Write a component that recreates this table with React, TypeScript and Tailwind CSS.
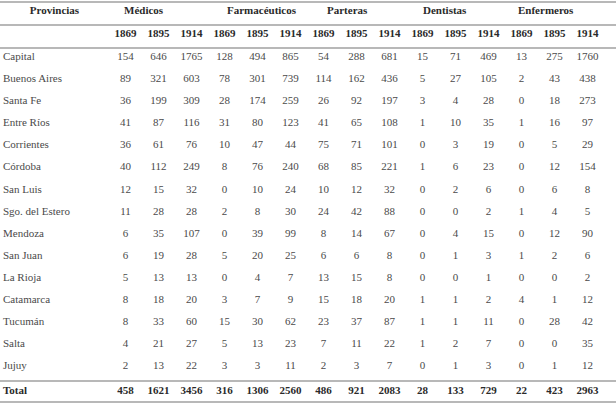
const YEARS = ["1869", "1895", "1914"];

const GROUPS = [
  { name: "Médicos", pad: "pl-[15px]" },
  { name: "Farmacéuticos", pad: "pl-[19px]" },
  { name: "Parteras", pad: "pl-[20px]" },
  { name: "Dentistas", pad: "pl-[17px]" },
  { name: "Enfermeros", pad: "pl-[13px]" },
];

const ROWS: [string, number[]][] = [
  ["Capital", [154, 646, 1765, 128, 494, 865, 54, 288, 681, 15, 71, 469, 13, 275, 1760]],
  ["Buenos Aires", [89, 321, 603, 78, 301, 739, 114, 162, 436, 5, 27, 105, 2, 43, 438]],
  ["Santa Fe", [36, 199, 309, 28, 174, 259, 26, 92, 197, 3, 4, 28, 0, 18, 273]],
  ["Entre Ríos", [41, 87, 116, 31, 80, 123, 41, 65, 108, 1, 10, 35, 1, 16, 97]],
  ["Corrientes", [36, 61, 76, 10, 47, 44, 75, 71, 101, 0, 3, 19, 0, 5, 29]],
  ["Córdoba", [40, 112, 249, 8, 76, 240, 68, 85, 221, 1, 6, 23, 0, 12, 154]],
  ["San Luis", [12, 15, 32, 0, 10, 24, 10, 12, 32, 0, 2, 6, 0, 6, 8]],
  ["Sgo. del Estero", [11, 28, 28, 2, 8, 30, 24, 42, 88, 0, 0, 2, 1, 4, 5]],
  ["Mendoza", [6, 35, 107, 0, 39, 99, 8, 14, 67, 0, 4, 15, 0, 12, 90]],
  ["San Juan", [6, 19, 28, 5, 20, 25, 6, 6, 8, 0, 1, 3, 1, 2, 6]],
  ["La Rioja", [5, 13, 13, 0, 4, 7, 13, 15, 8, 0, 0, 1, 0, 0, 2]],
  ["Catamarca", [8, 18, 20, 3, 7, 9, 15, 18, 20, 1, 1, 2, 4, 1, 12]],
  ["Tucumán", [8, 33, 60, 15, 30, 62, 23, 37, 87, 1, 1, 11, 0, 28, 42]],
  ["Salta", [4, 21, 27, 5, 13, 23, 7, 11, 22, 1, 2, 7, 0, 0, 35]],
  ["Jujuy", [2, 13, 22, 3, 3, 11, 2, 3, 7, 0, 1, 3, 0, 1, 12]],
];

const TOTAL = [458, 1621, 3456, 316, 1306, 2560, 486, 921, 2083, 28, 133, 729, 22, 423, 2963];

const grid = "grid grid-cols-[109px_repeat(15,33px)_1fr]";

function Rule() {
  return <div className="h-[2px] bg-[#b8b8b8]" />;
}

export default function App() {
  return (
    <div
      className="w-[616px] h-[404px] bg-white text-[11px] leading-[14px] text-[#4a4a4a] overflow-hidden"
      style={{ fontFamily: '"Liberation Serif", serif' }}
    >
      <div className="h-px" />
      <Rule />

      {/* group headings */}
      <div className={`${grid} h-[21px] font-bold text-[#2a2a2a]`}>
        <div className="text-center">Provincias</div>
        {GROUPS.map((g) => (
          <div key={g.name} className={`col-span-3 whitespace-nowrap ${g.pad}`}>
            {g.name}
          </div>
        ))}
      </div>
      <Rule />

      {/* years */}
      <div className={`${grid} h-[21px] font-bold text-[#2a2a2a]`}>
        <div />
        {GROUPS.flatMap((g) =>
          YEARS.map((y) => (
            <div key={g.name + y} className="text-center">
              {y}
            </div>
          ))
        )}
      </div>
      <Rule />

      {ROWS.map(([name, vals]) => (
        <div key={name} className={`${grid} h-[22.1px]`}>
          <div className="pl-[3px]">{name}</div>
          {vals.map((v, i) => (
            <div key={i} className="text-center">
              {v}
            </div>
          ))}
        </div>
      ))}
      <Rule />

      <div className={`${grid} h-[18.5px] pt-px font-bold text-[#2a2a2a]`}>
        <div className="pl-[3px]">Total</div>
        {TOTAL.map((v, i) => (
          <div key={i} className="text-center">
            {v}
          </div>
        ))}
      </div>
      <Rule />
    </div>
  );
}
